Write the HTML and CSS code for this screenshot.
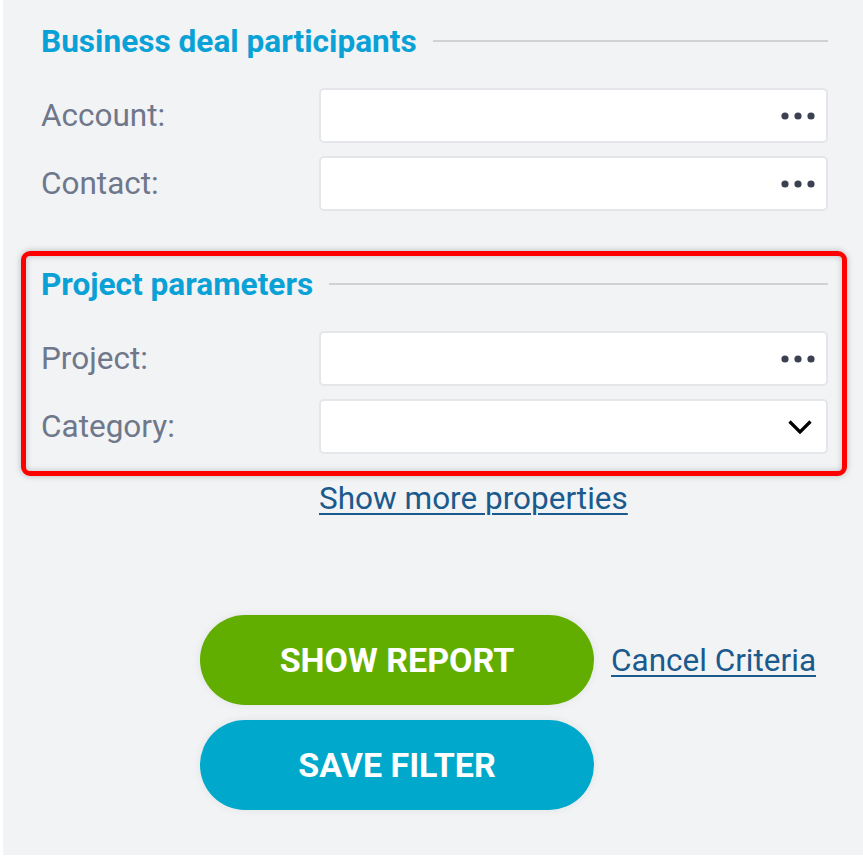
FILE: index.html
```html
<!DOCTYPE html>
<html>
<head>
<meta charset="utf-8">
<link rel="stylesheet" href="styles.css">
</head>
<body>
<div class="panel">
  <section class="group">
    <h2 class="group-title">Business deal participants</h2>
    <div class="fields">
      <label class="label">Account:</label>
      <div class="input"><svg class="dots" width="34" height="8" viewBox="0 0 34 8"><circle cx="4" cy="4" r="3.6"/><circle cx="17" cy="4" r="3.6"/><circle cx="30" cy="4" r="3.6"/></svg></div>
      <label class="label">Contact:</label>
      <div class="input"><svg class="dots" width="34" height="8" viewBox="0 0 34 8"><circle cx="4" cy="4" r="3.6"/><circle cx="17" cy="4" r="3.6"/><circle cx="30" cy="4" r="3.6"/></svg></div>
    </div>
  </section>
  <section class="group group-second highlighted">
    <h2 class="group-title">Project parameters</h2>
    <div class="fields">
      <label class="label">Project:</label>
      <div class="input"><svg class="dots" width="34" height="8" viewBox="0 0 34 8"><circle cx="4" cy="4" r="3.6"/><circle cx="17" cy="4" r="3.6"/><circle cx="30" cy="4" r="3.6"/></svg></div>
      <label class="label">Category:</label>
      <div class="input"><svg class="chevron" width="24" height="14" viewBox="0 0 24 14"><path d="M1.5 1.5 L12 12 L22.5 1.5" fill="none" stroke="#000" stroke-width="3.2"/></svg></div>
    </div>
  </section>
  <div class="more-row"><a class="link more-link" href="#">Show more properties</a></div>
  <div class="actions">
    <div class="action-row">
      <button class="btn btn-green">SHOW REPORT</button>
      <a class="link cancel-link" href="#">Cancel Criteria</a>
    </div>
    <div class="action-row">
      <button class="btn btn-blue">SAVE FILTER</button>
    </div>
  </div>
</div>
</body>
</html>
```
FILE: styles.css
```css
html, body {
  margin: 0;
  padding: 0;
  background: #ffffff;
}
body {
  font-family: Roboto, "Liberation Sans", sans-serif;
}
.panel {
  margin-left: 3px;
  height: 855px;
  background: #f2f3f5;
  box-sizing: border-box;
  padding: 21px 35px 0 38px;
}
.group-title {
  margin: 0;
  display: flex;
  align-items: center;
  gap: 16px;
  height: 40px;
  font-size: 31.6px;
  font-weight: 700;
  color: #0aa1d6;
  white-space: nowrap;
}
.group-title::after {
  content: "";
  flex: 1;
  height: 2px;
  background: #cfd1d5;
}
.fields {
  margin-top: 27px;
  display: grid;
  grid-template-columns: 278px 1fr;
  grid-auto-rows: 55px;
  row-gap: 13px;
  align-items: center;
}
.label {
  font-size: 31.5px;
  color: #6f778b;
}
.input {
  height: 55px;
  box-sizing: border-box;
  background: #ffffff;
  border: 2px solid #e4e6ea;
  border-radius: 5px;
  display: flex;
  align-items: center;
  justify-content: flex-end;
  padding-right: 11px;
}
.dots {
  fill: #3c4152;
}
.chevron {
  margin-right: 3px;
}
.group-second {
  margin-top: 53px;
  position: relative;
}
.highlighted::before {
  content: "";
  position: absolute;
  left: -20px;
  right: -19px;
  top: -13px;
  bottom: -22px;
  border: 5px solid #ff0000;
  border-radius: 9px;
  box-shadow: 0 0 6px rgba(0, 0, 0, 0.25), inset 0 0 6px rgba(0, 0, 0, 0.22);
  pointer-events: none;
}
.more-row {
  margin-top: 24px;
  padding-left: 278px;
  height: 40px;
  display: flex;
  align-items: center;
}
.link {
  color: #1a5a8d;
  text-decoration: underline;
  text-underline-offset: 4px;
  text-decoration-thickness: 2px;
}
.more-link {
  font-size: 31.5px;
}
.actions {
  margin-top: 97px;
  padding-left: 159px;
  display: flex;
  flex-direction: column;
  gap: 15px;
}
.action-row {
  display: flex;
  align-items: center;
  gap: 17px;
}
.btn {
  width: 394px;
  height: 90px;
  border: none;
  border-radius: 45px;
  color: #ffffff;
  font-family: Roboto, "Liberation Sans", sans-serif;
  font-size: 34px;
  font-weight: 700;
  box-shadow: 0 0 10px rgba(0, 0, 0, 0.07);
  padding: 0;
}
.btn-green {
  background: #62ae00;
}
.btn-blue {
  background: #00a9cb;
}
.cancel-link {
  font-size: 31.5px;
}
```
